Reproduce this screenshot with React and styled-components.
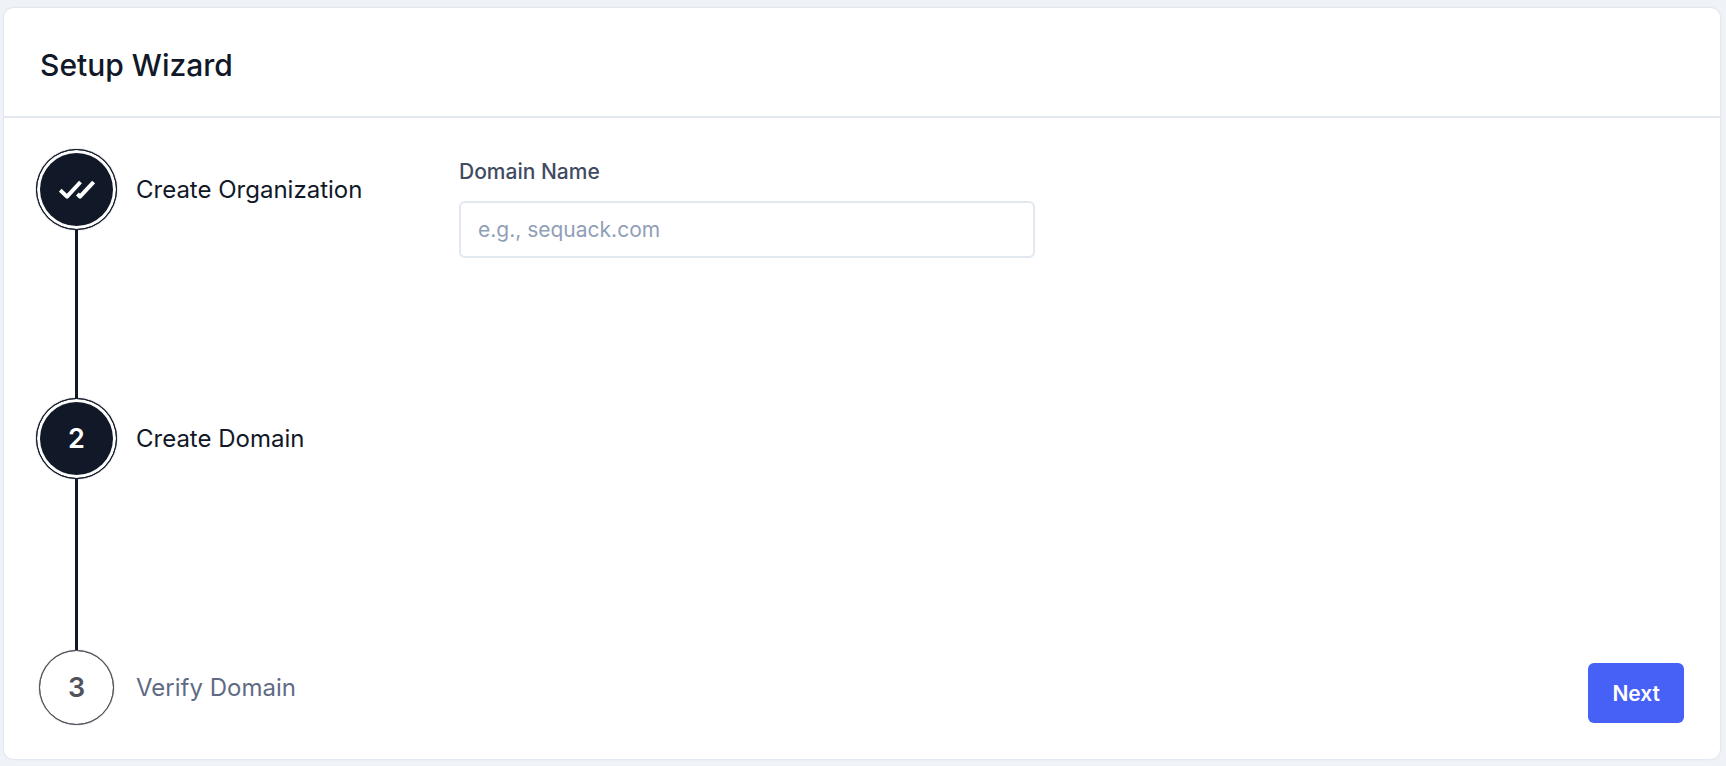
import React, { useState } from 'react';
import styled, { createGlobalStyle } from 'styled-components';

//CSS
const GlobalStyle = createGlobalStyle`
	* {box-sizing:border-box;}
	body {margin:0; background:#eff3f8; font-family:Inter, sans-serif; color:#111827;}
`;

const Card = styled.main`
	display:flex;
	flex-direction:column;
	min-height:calc(100vh - 15px);
	margin:8px 6px 7px 4px;
	background:#fff;
	border-radius:9px;
	box-shadow:0 0 2px rgba(100, 116, 160, 0.3);
`;

const CardHeader = styled.header`
	padding:39px 36px 33px;
	border-bottom:2px solid #e2e8f0;
`;

const Title = styled.h1`
	margin:0;
	font-size:30px;
	line-height:36px;
	font-weight:500;
`;

const CardBody = styled.div`
	flex:1;
	display:flex;
	padding:31px 36px 31px 32px;
`;

const StepList = styled.ol`
	flex:none;
	width:423px;
	margin:0;
	padding:0;
	list-style:none;
`;

const Step = styled.li`
	display:grid;
	grid-template-columns:81px 1fr;
	grid-template-rows:81px auto;
	column-gap:19px;
	align-items:center;
	justify-items:center;
`;

const Circle = styled.div`
	display:flex;
	align-items:center;
	justify-content:center;
	width:${props => props.$reached ? 81 : 75}px;
	height:${props => props.$reached ? 81 : 75}px;
	border:1px solid ${props => props.$reached ? "#111827" : "#52525b"};
	border-radius:50%;
	box-shadow:0 0 1px ${props => props.$reached ? "#111827" : "#52525b"};
	padding:3px;
	background:${props => props.$reached ? "#111827" : "#fff"} content-box;
	color:${props => props.$reached ? "#fff" : "#52525b"};
	font-size:27px;
	font-weight:600;
`;

const StepName = styled.span`
	justify-self:start;
	font-size:24px;
	line-height:32px;
	color:${props => props.$reached ? "#111827" : "#5f6b85"};
`;

// the circle of a step still to come is smaller, so its line runs 3px further
const Connector = styled.div`
	width:3px;
	height:${props => props.$nextReached ? 168 : 171}px;
	margin-bottom:${props => props.$nextReached ? 0 : -3}px;
	background:#111827;
`;

const Form = styled.form`
	flex:1;
	display:flex;
	flex-direction:column;
	justify-content:space-between;
	padding:9px 0 5px;
`;

const Field = styled.div`
	display:flex;
	flex-direction:column;
	gap:15px;
	width:47%;
`;

const Label = styled.label`
	font-size:21px;
	line-height:28px;
	font-weight:500;
	color:#414b5f;
`;

const Input = styled.input`
	height:57px;
	padding:0 17px;
	border:2px solid #e2e8f0;
	border-radius:6px;
	font-family:inherit;
	font-size:21px;
	color:#111827;
	&::placeholder {color:#919eb7; opacity:1;}
`;

const NextButton = styled.button`
	align-self:flex-end;
	height:60px;
	padding:0 24px;
	border:0;
	border-radius:6px;
	background:#4761f7;
	color:#fff;
	font-family:inherit;
	font-size:21px;
	font-weight:600;
	cursor:pointer;
`;

const DoubleCheck = () => (
	<svg width="36" height="20" viewBox="0 0 36 20" fill="none" stroke="#fff" strokeWidth="4" strokeLinejoin="round" aria-hidden="true">
		<path d="M1.2 10.2 L8 16.6 L21.5 2" />
		<path d="M18.4 14 L21 16.6 L34.6 2" />
	</svg>
);

const steps = ["Create Organization", "Create Domain", "Verify Domain"];

function App() {
	const [current, setCurrent] = useState(2);
	const [domain, setDomain] = useState("");

	const onSubmit = (e) => {
		e.preventDefault();
		setCurrent(Math.min(current + 1, steps.length));
	}

	return (
		<>
			<GlobalStyle />
			<Card>
				<CardHeader>
					<Title>Setup Wizard</Title>
				</CardHeader>
				<CardBody>
					<StepList>
						{steps.map((name, i) => {
							const reached = i < current;
							return (
								<Step key={name}>
									<Circle $reached={reached}>{i + 1 < current ? <DoubleCheck /> : i + 1}</Circle>
									<StepName $reached={reached}>{name}</StepName>
									{i < steps.length - 1 && <Connector $nextReached={i + 1 < current} />}
								</Step>
							);
						})}
					</StepList>
					<Form onSubmit={onSubmit}>
						<Field>
							<Label htmlFor="domain">Domain Name</Label>
							<Input id="domain" placeholder="e.g., sequack.com" value={domain} onChange={e => setDomain(e.target.value)} />
						</Field>
						<NextButton type="submit">Next</NextButton>
					</Form>
				</CardBody>
			</Card>
		</>
	);
}

export default App;
